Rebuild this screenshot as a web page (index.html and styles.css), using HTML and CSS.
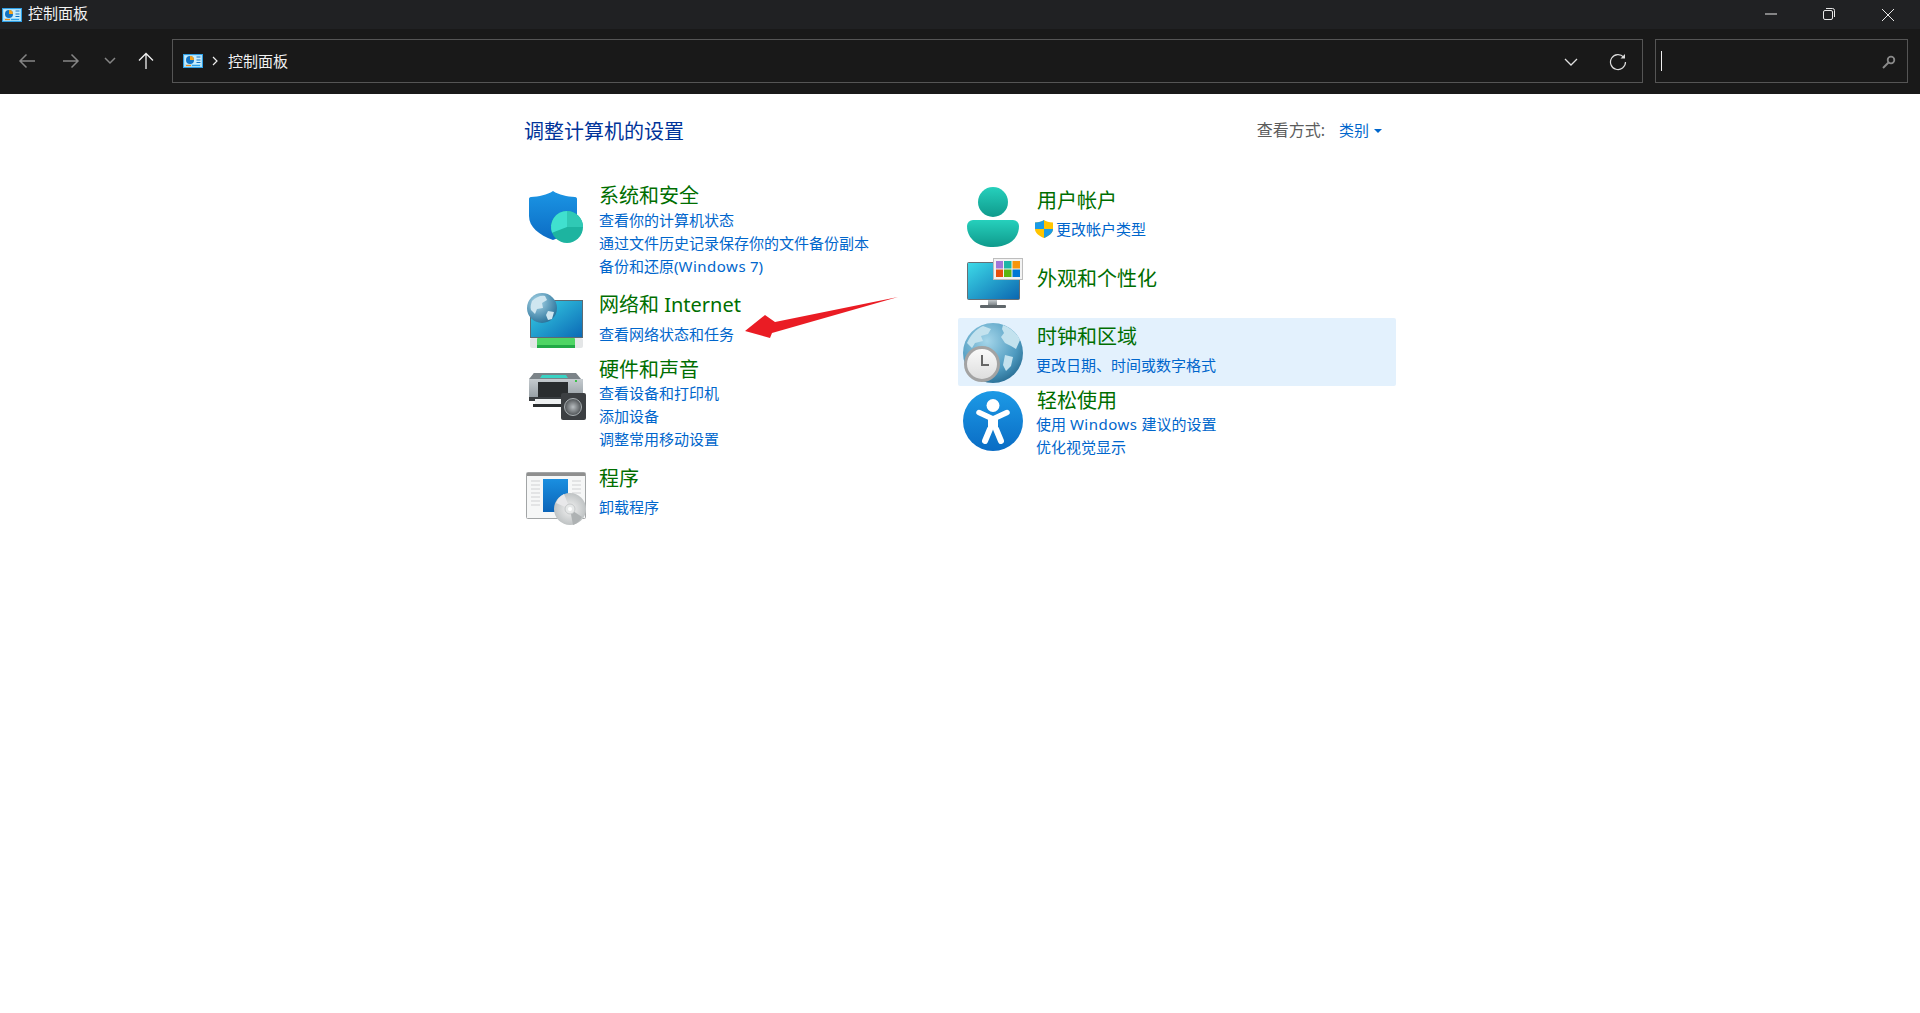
FILE: index.html
```html
<!DOCTYPE html>
<html lang="zh-CN">
<head>
<meta charset="utf-8">
<title>控制面板</title>
<link rel="stylesheet" href="styles.css">
</head>
<body>
<header class="titlebar">
  <div class="title-left">
    <svg class="cp-icon" viewBox="0 0 20 14"><rect x=".5" y=".5" width="19" height="13" fill="#a9e0fa" stroke="#2f9fe6"/><path d="M2 2h16v8H2z" fill="#c9edfc"/><circle cx="7" cy="6" r="4" fill="#1273c4"/><path d="M7 6V2A4 4 0 0 1 11 6z" fill="#f4a21c"/><path d="M13.500 3h4M13.500 6h4M13.500 8.500h4" stroke="#1273c4"/><path d="M3 11.500h5" stroke="#f08a1a" stroke-width="1.200"/><path d="M9 11.500h8" stroke="#2f9fe6" stroke-width="1.200"/></svg>
    <span class="title-text">控制面板</span>
  </div>
  <div class="win-controls">
    <button class="win-btn win-btn-shift"><svg viewBox="0 0 14 14"><path d="M1 7h12" stroke="#e8e8e8" fill="none"/></svg></button>
    <button class="win-btn win-btn-shift"><svg viewBox="0 0 14 14"><rect x="1.500" y="3.500" width="9" height="9" rx="1.500" stroke="#e8e8e8" fill="none"/><path d="M4 1.500h6.500a2 2 0 0 1 2 2V10" stroke="#e8e8e8" fill="none"/></svg></button>
    <button class="win-btn"><svg viewBox="0 0 14 14"><path d="M1 1l12 12M13 1L1 13" stroke="#e8e8e8" fill="none"/></svg></button>
  </div>
</header>
<nav class="toolbar">
  <div class="nav-buttons">
    <button class="nav-btn nav-wide"><svg viewBox="0 0 18 18"><path d="M17 9H2M8.500 2.500L2 9l6.500 6.500" stroke="#858585" stroke-width="1.500" fill="none"/></svg></button>
    <button class="nav-btn nav-wide"><svg viewBox="0 0 18 18"><path d="M1 9h15M9.500 2.500L16 9l-6.500 6.500" stroke="#858585" stroke-width="1.500" fill="none"/></svg></button>
    <button class="nav-btn nav-mid"><svg viewBox="0 0 18 18"><path d="M4 6l5 5 5-5" stroke="#858585" stroke-width="1.500" fill="none"/></svg></button>
    <button class="nav-btn nav-up"><svg viewBox="0 0 18 18"><path d="M9 17V1.500M2 8.500l7-7 7 7" stroke="#f0f0f0" stroke-width="1.300" fill="none"/></svg></button>
  </div>
  <div class="address">
    <svg class="cp-icon" viewBox="0 0 20 14"><rect x=".5" y=".5" width="19" height="13" fill="#a9e0fa" stroke="#2f9fe6"/><path d="M2 2h16v8H2z" fill="#c9edfc"/><circle cx="7" cy="6" r="4" fill="#1273c4"/><path d="M7 6V2A4 4 0 0 1 11 6z" fill="#f4a21c"/><path d="M13.500 3h4M13.500 6h4M13.500 8.500h4" stroke="#1273c4"/><path d="M3 11.500h5" stroke="#f08a1a" stroke-width="1.200"/><path d="M9 11.500h8" stroke="#2f9fe6" stroke-width="1.200"/></svg>
    <svg class="crumb-chev" viewBox="0 0 6 10"><path d="M1 1l4 4-4 4" stroke="#eee" stroke-width="1.200" fill="none"/></svg>
    <span class="crumb">控制面板</span>
    <span class="spacer"></span>
    <svg class="addr-down" viewBox="0 0 14 8"><path d="M1 1l6 6 6-6" stroke="#e0e0e0" stroke-width="1.300" fill="none"/></svg>
    <svg class="refresh" viewBox="0 0 18 18"><path d="M14.700 4.200A7.500 7.500 0 1 0 16.500 9" stroke="#dcdcdc" stroke-width="1.200" fill="none"/><path d="M16 1v4.500h-4.500z" fill="#dcdcdc"/></svg>
  </div>
  <div class="search">
    <span class="caret"></span>
    <svg class="search-icon" viewBox="0 0 14 14"><circle cx="9" cy="5" r="3.300" stroke="#8a8a8a" stroke-width="1.800" fill="none"/><path d="M6.500 7.500L1 13" stroke="#8a8a8a" stroke-width="2" fill="none"/></svg>
  </div>
</nav>
<main class="content">
  <div class="head-row">
    <h1 class="page-title">调整计算机的设置</h1>
    <div class="view-by">
      <span class="view-label">查看方式:</span>
      <a class="view-value">类别</a>
      <span class="view-tri"></span>
    </div>
  </div>
  <div class="columns">
    <section class="col col-left">
      <article class="item">
        <svg class="icon ic-shield" viewBox="0 0 60 60">
          <defs><linearGradient id="gs" x1="0" y1="0" x2="0" y2="1"><stop offset="0" stop-color="#1b95e4"/><stop offset="1" stop-color="#0c6cc4"/></linearGradient></defs>
          <path d="M27 3c6 4 14 5.500 22 6 1.500 0 2 1 2 2v17c0 11-10 19-24 24C13 47 3 39 3 28V11c0-1 .5-2 2-2 8-.5 16-2 22-6z" fill="url(#gs)"/>
          <circle cx="41" cy="39" r="16" fill="#1db4a0"/>
          <path d="M41 39V23a16 16 0 0 1 16 16z" fill="#30c9b5"/>
          <path d="M41 39V23a16 16 0 0 0-14.900 21.800z" fill="#40e0cf"/>
        </svg>
        <div class="text">
          <h2 class="heading">系统和安全</h2>
          <a class="link">查看你的计算机状态</a>
          <a class="link">通过文件历史记录保存你的文件备份副本</a>
          <a class="link">备份和还原(<span class="latin">Windows</span> 7)</a>
        </div>
      </article>
      <article class="item">
        <svg class="icon ic-net" viewBox="0 0 60 60">
          <defs>
            <linearGradient id="gm" x1="0" y1="0" x2="1" y2="1"><stop offset="0" stop-color="#38d4e6"/><stop offset="1" stop-color="#0b68b5"/></linearGradient>
            <radialGradient id="gg" cx=".35" cy=".3" r=".8"><stop offset="0" stop-color="#a9d6e8"/><stop offset="1" stop-color="#1f6a94"/></radialGradient>
          </defs>
          <rect x="4.500" y="9.500" width="52" height="37" fill="url(#gm)" stroke="#5d6a72"/>
          <rect x="4" y="47" width="53" height="10" rx="2" fill="#e4e6e7"/>
          <rect x="11" y="47" width="38" height="10" rx="1" fill="#4fd564"/>
          <rect x="11" y="54" width="38" height="3" fill="#22a946"/>
          <circle cx="16" cy="17" r="15" fill="url(#gg)"/>
          <path d="M6 10c4-4 9-6 13-5l2 4-5 3 1 5-6 1-2 5-4-4c-1-3 0-6 1-9zM22 20l6 1-2 7-4 1-2-5z" fill="#cfe6f0"/>
        </svg>
        <div class="text text-raised">
          <h2 class="heading">网络和 Internet</h2>
          <a class="link link-first link-lowered">查看网络状态和任务</a>
        </div>
      </article>
      <article class="item">
        <svg class="icon ic-print" viewBox="0 0 60 60">
          <defs>
            <linearGradient id="gp" x1="0" y1="0" x2="0" y2="1"><stop offset="0" stop-color="#c5cbcf"/><stop offset="1" stop-color="#8e979d"/></linearGradient>
            <radialGradient id="gsp" cx=".5" cy=".5" r=".5"><stop offset="0" stop-color="#b8bdc0"/><stop offset="1" stop-color="#4d5154"/></radialGradient>
          </defs>
          <path d="M8 7h40l9 9v15H3V16z" fill="#6d7478"/>
          <path d="M3 13h54v22H3z" fill="url(#gp)"/>
          <path d="M8 7h42l5 6H3z" fill="#7b8388"/>
          <path d="M16 9h24l2 3H14z" fill="#39d3c4"/>
          <rect x="49" y="14" width="2" height="2" fill="#3cc04a"/>
          <rect x="12" y="16" width="30" height="16" fill="#2a2d2f"/>
          <rect x="3" y="31" width="40" height="4" fill="#3a3e41"/>
          <rect x="9" y="33" width="32" height="5" fill="#eef0f1"/>
          <rect x="7" y="38" width="30" height="3" fill="#2b2e30"/>
          <rect x="35" y="27" width="25" height="27" rx="2" fill="#3c3f42"/>
          <circle cx="47" cy="41" r="8.500" fill="url(#gsp)" stroke="#aab0b3"/>
        </svg>
        <div class="text">
          <h2 class="heading heading-tight">硬件和声音</h2>
          <a class="link">查看设备和打印机</a>
          <a class="link">添加设备</a>
          <a class="link">调整常用移动设置</a>
        </div>
      </article>
      <article class="item">
        <svg class="icon ic-prog" viewBox="0 0 60 60">
          <defs>
            <linearGradient id="gb" x1="0" y1="0" x2="0" y2="1"><stop offset="0" stop-color="#1a8fe0"/><stop offset="1" stop-color="#0b64b8"/></linearGradient>
            <radialGradient id="gd" cx=".5" cy=".5" r=".5"><stop offset="0" stop-color="#f2f2f2"/><stop offset="1" stop-color="#bfc3c4"/></radialGradient>
          </defs>
          <rect x=".5" y="4.500" width="59" height="46" rx="1" fill="#f6f7f7" stroke="#a2a5a6"/>
          <rect x="1" y="5" width="58" height="3" fill="#8f8f8f"/>
          <path d="M5 13h9M5 17h9M5 21h9M5 25h9M5 29h9M5 33h9M5 37h9M46 13h9M46 17h9M46 21h9M46 25h9" stroke="#d0d2d3" stroke-width="1.200"/>
          <rect x="17" y="11" width="25" height="33" fill="url(#gb)"/>
          <circle cx="44" cy="41" r="16" fill="url(#gd)"/>
          <path d="M44 41L30 35A16 16 0 0 1 38 26z" fill="#e8e8ea"/>
          <path d="M44 41l3 16a16 16 0 0 0 9-8z" fill="#aeb2b3"/>
          <circle cx="44" cy="41" r="5" fill="#e6e8e8" stroke="#c6c9ca"/>
          <circle cx="44" cy="41" r="2" fill="#fff"/>
        </svg>
        <div class="text">
          <h2 class="heading">程序</h2>
          <a class="link link-first">卸载程序</a>
        </div>
      </article>
    </section>
    <section class="col col-right">
      <article class="item">
        <svg class="icon ic-user" viewBox="0 0 60 60">
          <defs>
            <linearGradient id="gu" x1="0" y1="0" x2="0" y2="1"><stop offset="0" stop-color="#26d0bc"/><stop offset="1" stop-color="#0f9a8c"/></linearGradient>
            <linearGradient id="gu2" x1="0" y1="0" x2="0" y2="1"><stop offset="0" stop-color="#26d0bc"/><stop offset="1" stop-color="#0f9a8c"/></linearGradient>
          </defs>
          <circle cx="30" cy="15" r="15" fill="url(#gu)"/>
          <path d="M10 33h40a6 6 0 0 1 6 6c0 13-11 21-26 21S4 52 4 39a6 6 0 0 1 6-6z" fill="url(#gu2)"/>
        </svg>
        <div class="text">
          <h2 class="heading">用户帐户</h2>
          <div class="link-row link-first">
            <svg class="uac" viewBox="0 0 18 18"><path d="M9 0c2 1.500 5 2.500 9 2.500V9c0 4-4 7-9 9-5-2-9-5-9-9V2.500C4 2.500 7 1.500 9 0z" fill="#ffc400"/><path d="M9 0c-2 1.500-5 2.500-9 2.500V9h9zM9 9v9c5-2 9-5 9-9z" fill="#1a9be6"/></svg>
            <a class="link-inline">更改帐户类型</a>
          </div>
        </div>
      </article>
      <article class="item">
        <svg class="icon ic-look" viewBox="0 0 60 60">
          <defs>
            <linearGradient id="gl" x1="0" y1="0" x2="1" y2="1"><stop offset="0" stop-color="#3ddbe8"/><stop offset="1" stop-color="#0b66b0"/></linearGradient>
            <linearGradient id="gst" x1="0" y1="0" x2="0" y2="1"><stop offset="0" stop-color="#c4c9cc"/><stop offset="1" stop-color="#71787c"/></linearGradient>
          </defs>
          <rect x="4.500" y="8.500" width="52" height="37" rx="1" fill="url(#gl)" stroke="#666f75"/>
          <rect x="25" y="46" width="9" height="6" fill="url(#gst)"/>
          <rect x="17" y="51" width="26" height="3" rx="1" fill="#5f666a"/>
          <rect x="30.500" y="4.500" width="29" height="21" fill="#f3f3f3" stroke="#bdbdbd"/>
          <rect x="33" y="7" width="7" height="7.500" fill="#a176d8"/>
          <rect x="41" y="7" width="7.500" height="7.500" fill="#1db6a6"/>
          <rect x="49.500" y="7" width="7.500" height="7.500" fill="#f7950c"/>
          <rect x="33" y="15.500" width="7" height="7.500" fill="#e8500f"/>
          <rect x="41" y="15.500" width="7.500" height="7.500" fill="#5cb612"/>
          <rect x="49.500" y="15.500" width="7.500" height="7.500" fill="#0078d4"/>
        </svg>
        <div class="text">
          <h2 class="heading">外观和个性化</h2>
        </div>
      </article>
      <article class="item item-hover">
        <svg class="icon ic-clock" viewBox="0 0 60 60">
          <defs>
            <radialGradient id="gc" cx=".4" cy=".3" r=".85"><stop offset="0" stop-color="#a5d6ea"/><stop offset=".6" stop-color="#4f9bc0"/><stop offset="1" stop-color="#16587f"/></radialGradient>
            <linearGradient id="gf" x1="0" y1="0" x2="0" y2="1"><stop offset="0" stop-color="#fbfbfb"/><stop offset="1" stop-color="#dcdcdc"/></linearGradient>
          </defs>
          <circle cx="30" cy="30" r="30" fill="url(#gc)"/>
          <path d="M4 20c3-7 9-14 16-17l8 3-3 5-7 2 2 5-8 2-3 5zM40 2c8 3 14 8 17 15l-4 9-5-3-6-3-4-6 3-4-2-4zM42 32l8 2-2 9-5 5-3-6z" fill="#c3e2ee"/>
          <circle cx="19" cy="41" r="16.500" fill="url(#gf)" stroke="#a3a3a3" stroke-width="3"/>
          <path d="M19 32v10h7" stroke="#666" stroke-width="2" fill="none"/>
        </svg>
        <div class="text">
          <h2 class="heading">时钟和区域</h2>
          <a class="link link-first">更改日期、时间或数字格式</a>
        </div>
      </article>
      <article class="item">
        <svg class="icon ic-ease" viewBox="0 0 60 60">
          <defs><linearGradient id="ge" x1="0" y1="0" x2="0" y2="1"><stop offset="0" stop-color="#1c9ae6"/><stop offset="1" stop-color="#0a6cc4"/></linearGradient></defs>
          <circle cx="30" cy="30" r="30" fill="url(#ge)"/>
          <circle cx="30" cy="14.500" r="6.500" fill="#fff"/>
          <path d="M16 21.500l14 6.500 14-6.500" stroke="#fff" stroke-width="5.500" stroke-linecap="round" stroke-linejoin="round" fill="none"/>
          <path d="M30 26v12" stroke="#fff" stroke-width="10" fill="none"/>
          <path d="M27 38l-5 12M33 38l5 12" stroke="#fff" stroke-width="6" stroke-linecap="round" fill="none"/>
        </svg>
        <div class="text">
          <h2 class="heading heading-tight">轻松使用</h2>
          <a class="link">使用 <span class="latin">Windows</span> 建议的设置</a>
          <a class="link">优化视觉显示</a>
        </div>
      </article>
    </section>
  </div>
</main>
<svg class="annotation" viewBox="0 0 165 55"><path d="M158 7L35 32 25 25 5 41l25 7 2-5z" fill="#ea1c24"/></svg>
</body>
</html>
```
FILE: styles.css
```css
* { box-sizing: border-box; }
html, body { margin: 0; height: 100%; }
body {
  background: #fff;
  font-family: "Noto Sans", "Noto Sans CJK SC", sans-serif;
  overflow: hidden;
  position: relative;
}
h1, h2 { margin: 0; font-weight: 400; }
button { background: none; border: 0; padding: 0; display: flex; align-items: center; justify-content: center; }
svg { display: block; flex: none; }

.titlebar {
  height: 29px;
  background: #202123;
  display: flex;
  align-items: center;
  justify-content: space-between;
  padding: 0 3px 0 2px;
  color: #f2f2f2;
}
.title-left { display: flex; align-items: center; }
.cp-icon { width: 20px; height: 14px; }
.title-text { font-size: 15px; line-height: 27px; margin-left: 6px; padding-bottom: 2px; }
.win-controls { display: flex; }
.win-btn { width: 58px; height: 29px; }
.win-btn svg { width: 14px; height: 14px; }
.win-btn-shift { padding-right: 2px; padding-bottom: 1px; }

.toolbar {
  height: 65px;
  background: #191919;
  display: flex;
  padding: 10px 12px 11px 5px;
  color: #f0f0f0;
}
.nav-buttons { display: flex; width: 167px; align-items: center; }
.nav-btn { height: 44px; }
.nav-btn svg { width: 18px; height: 18px; }
.nav-wide { width: 44px; }
.nav-mid { width: 33px; }
.nav-up { width: 40px; }
.address {
  flex: 1;
  height: 44px;
  border: 1px solid #555;
  display: flex;
  align-items: center;
  padding: 0 15px 0 10px;
  margin-right: 12px;
}
.crumb-chev { width: 6px; height: 10px; margin-left: 9px; }
.crumb { font-size: 15px; margin-left: 10px; padding-bottom: 2px; }
.spacer { flex: 1; }
.addr-down { width: 14px; height: 8px; margin-right: 31px; margin-top: 2px; }
.refresh { width: 18px; height: 18px; margin-top: 1px; }
.search {
  width: 253px;
  height: 44px;
  border: 1px solid #555;
  display: flex;
  align-items: center;
  justify-content: space-between;
  padding: 0 11px 0 5px;
}
.caret { width: 1px; height: 20px; background: #eee; }
.search-icon { width: 14px; height: 14px; margin-top: 1px; }

.content { margin-left: 524px; width: 872px; padding-top: 22px; }
.head-row { display: flex; justify-content: space-between; align-items: center; height: 30px; padding-right: 14px; }
.page-title { font-size: 20px; line-height: 28px; padding-top: 2px; color: #003399; }
.view-by { display: flex; align-items: center; }
.view-label { color: #5c5c5c; font-size: 16px; line-height: 22px; padding-bottom: 2px; }
.view-value { color: #0066cc; font-size: 15px; line-height: 22px; padding-bottom: 2px; margin-left: 14px; }
.view-tri {
  width: 0; height: 0;
  margin-left: 5px;
  border-left: 4px solid transparent;
  border-right: 4px solid transparent;
  border-top: 4px solid #0066cc;
}
.columns { display: grid; grid-template-columns: 434px 438px; margin-top: 35px; }
.col { display: grid; }
.col-left { grid-template-rows: 110px 64px 109px auto; }
.col-right { grid-template-rows: 78px 54px 68px auto; margin-top: 5px; }
.item { display: flex; align-items: flex-start; }
.col-left .item { padding-left: 2px; }
.col-right .item { padding-left: 5px; }
.icon { width: 60px; height: 60px; }
.text { margin-left: 13px; display: flex; flex-direction: column; }
.text-raised { margin-top: -1px; }
.heading { font-size: 20px; line-height: 26px; padding-top: 2px; color: #006e00; white-space: nowrap; }
.col-right .heading { margin-left: 1px; }
.heading-tight { margin-bottom: -1px; }
.link, .link-inline { font-size: 15px; line-height: 23px; color: #0066cc; white-space: nowrap; }
.latin { letter-spacing: .5px; }
.link-first { margin-top: 4px; }
.link-lowered { margin-top: 5px; }
.link-row { display: flex; align-items: center; margin-left: -1px; }
.uac { width: 18px; height: 18px; margin-right: 3px; margin-top: -1px; }
.item-hover { background: #e3f1fd; border-radius: 2px; padding-top: 4px; }

.ic-shield { margin-top: 7px; }
.ic-net { margin-top: 0; }
.ic-print { margin-top: 11px; }
.ic-prog { margin-top: 4px; }
.ic-user { margin-top: 1px; }
.ic-look { margin-top: -10px; }
.ic-clock { margin-top: 1px; }
.ic-ease { margin-top: 5px; }

.annotation { position: absolute; left: 740px; top: 290px; width: 165px; height: 55px; }
```
